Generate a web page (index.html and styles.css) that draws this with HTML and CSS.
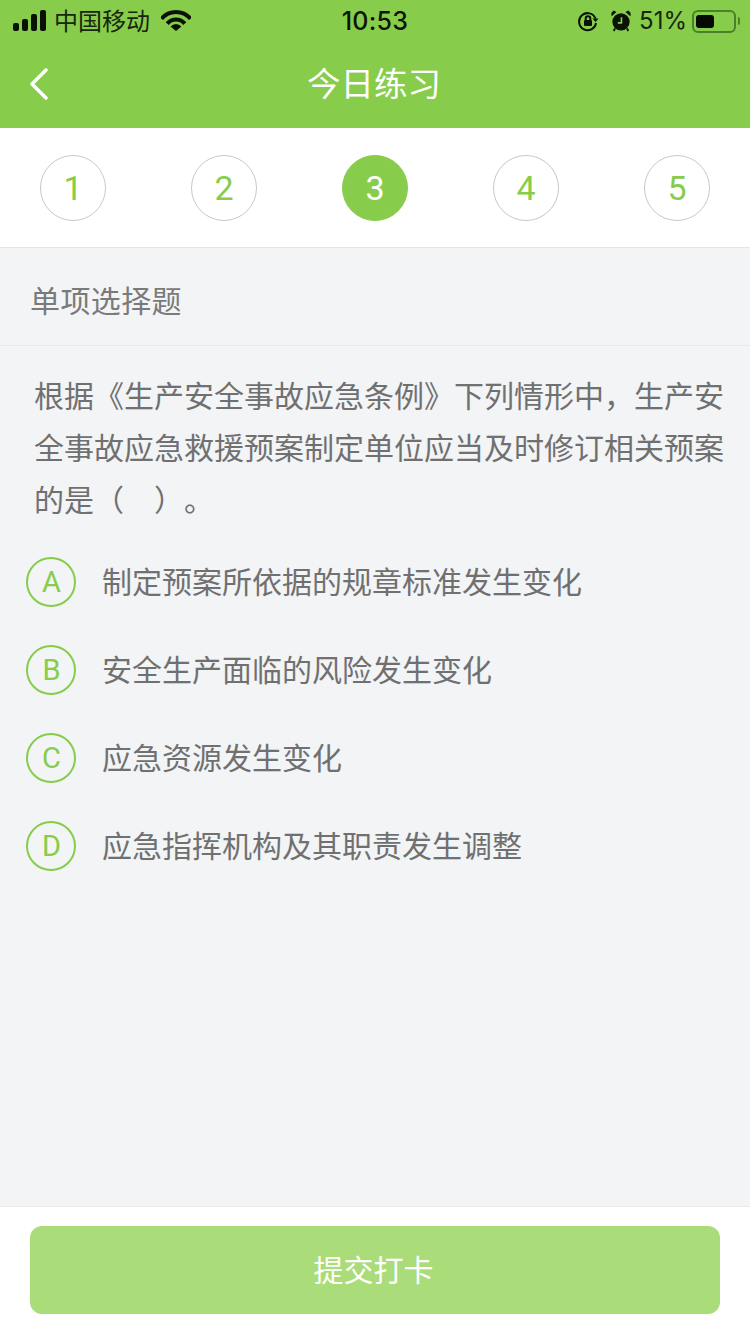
FILE: index.html
```html
<!DOCTYPE html>
<html lang="zh-CN">
<head>
<meta charset="utf-8">
<title>今日练习</title>
<link rel="stylesheet" href="styles.css">
</head>
<body>
<div class="page">
  <header class="top">
    <div class="status">
      <div class="status-left">
        <svg class="signal" width="36" height="22" viewBox="0 0 36 22"><rect x="1" y="13" width="6" height="8" rx="2"/><rect x="10" y="9" width="6" height="12" rx="2"/><rect x="19" y="4" width="6" height="17" rx="2"/><rect x="28" y="0" width="6" height="21" rx="2"/></svg>
        <span class="carrier">中国移动</span>
        <svg class="wifi" width="30" height="22" viewBox="0 0 30 22"><path class="arc" d="M.5 8.800A19 19 0 0 1 29.500 8.800"/><path class="arc" d="M6.200 13.600A11.500 11.500 0 0 1 23.800 13.600"/><path d="M15 21 9.600 16.500A7 7 0 0 1 20.400 16.500z"/></svg>
      </div>
      <span class="clock">10:53</span>
      <div class="status-right">
        <svg class="lock" width="22" height="22" viewBox="0 0 22 22"><path class="ring" d="M18.500 8.500A8.500 8.500 0 1 0 19 13"/><path d="M15.500 8.500h6l-3 3.500z"/><rect x="7" y="10" width="8" height="6" rx="1"/><path class="shackle" d="M8.700 10V8.600a2.300 2.300 0 0 1 4.600 0V10"/></svg>
        <svg class="alarm" width="20" height="22" viewBox="0 0 22 24"><circle cx="11" cy="13" r="9.500"/><path d="M.5 7 6 2 3 .5 .5 3zM21.500 7 16 2 19 .5 21.500 3z"/><path class="hand" d="M11.500 8v6H7.500"/><path class="leg" d="M4.500 20 3 23M17.500 20 19 23"/></svg>
        <span class="percent">51%</span>
        <span class="battery"><span class="battery-fill"></span></span>
        <span class="battery-cap"></span>
      </div>
    </div>
    <div class="nav">
      <svg class="back" width="20" height="32" viewBox="0 0 20 32"><path d="M17 2 3 16l14 14"/></svg>
      <h1 class="title">今日练习</h1>
    </div>
  </header>

  <nav class="steps">
    <span class="step">1</span>
    <span class="step">2</span>
    <span class="step step-on">3</span>
    <span class="step">4</span>
    <span class="step">5</span>
  </nav>

  <main class="body">
    <div class="kind">单项选择题</div>
    <p class="stem">根据《生产安全事故应急条例》下列情形中，生产安全事故应急救援预案制定单位应当及时修订相关预案的是（　）。</p>
    <ul class="options">
      <li class="option"><span class="badge">A</span><span class="option-text">制定预案所依据的规章标准发生变化</span></li>
      <li class="option"><span class="badge">B</span><span class="option-text">安全生产面临的风险发生变化</span></li>
      <li class="option"><span class="badge">C</span><span class="option-text">应急资源发生变化</span></li>
      <li class="option"><span class="badge">D</span><span class="option-text">应急指挥机构及其职责发生调整</span></li>
    </ul>
  </main>

  <footer class="foot">
    <button class="submit" type="button">提交打卡</button>
  </footer>
</div>
</body>
</html>
```
FILE: styles.css
```css
* { box-sizing: border-box; }
html, body { margin: 0; padding: 0; }
body {
  font-family: "Noto Sans CJK SC", "Liberation Sans", sans-serif;
  background: #f2f4f6;
  text-spacing-trim: space-all;
}
.page {
  width: 750px;
  height: 1334px;
  display: flex;
  flex-direction: column;
  overflow: hidden;
}

/* green top area */
.top {
  height: 128px;
  background: #87cd4b;
  flex: none;
}
.status {
  height: 40px;
  display: grid;
  grid-template-columns: 1fr auto 1fr;
  align-items: center;
  color: #0c1505;
}
.status-left {
  display: flex;
  align-items: center;
  padding-left: 12px;
}
.signal, .wifi, .lock, .alarm { fill: #0a1205; flex: none; }
.carrier {
  font-size: 24px;
  line-height: 38px;
  height: 40px;
  margin-left: 6px;
  color: #18260c;
}
.wifi { margin-left: 11px; }
.wifi .arc { fill: none; stroke: #0a1205; stroke-width: 4; }
.clock {
  font-family: Inter, "Liberation Sans", sans-serif;
  font-size: 25px;
  font-weight: 500;
  line-height: 42px;
  letter-spacing: .3px;
}
.status-right {
  display: flex;
  align-items: center;
  justify-content: flex-end;
  padding-right: 10px;
}
.lock .ring, .lock .shackle { fill: none; stroke: #0a1205; stroke-width: 2; }
.alarm { margin-left: 12px; }
.alarm .hand { fill: none; stroke: #87cd4b; stroke-width: 1.800; }
.alarm .leg { fill: none; stroke: #0a1205; stroke-width: 2; }
.percent {
  font-family: Inter, "Liberation Sans", sans-serif;
  font-size: 24px;
  line-height: 42px;
  margin-left: 8px;
  color: #18260c;
}
.battery {
  width: 44px;
  height: 23px;
  margin-left: 5px;
  border: 2px solid #4b7f28;
  border-radius: 6px;
  padding: 3px 2px;
  display: flex;
}
.battery-fill {
  width: 18px;
  background: #050a02;
  border-radius: 3px;
}
.battery-cap {
  width: 2px;
  height: 8px;
  margin-left: 2px;
  background: #4b7f28;
  border-radius: 0 2px 2px 0;
}
.nav {
  height: 88px;
  position: relative;
  display: flex;
  align-items: center;
  justify-content: center;
}
.back {
  position: absolute;
  left: 29px;
  top: 28px;
  fill: none;
  stroke: #fff;
  stroke-width: 3.500;
  stroke-linecap: round;
  stroke-linejoin: round;
}
.title {
  margin: 0;
  padding-right: 2px;
  font-size: 33.500px;
  font-weight: 400;
  color: #fff;
  line-height: 84px;
  height: 88px;
}

/* numbered question strip */
.steps {
  height: 120px;
  flex: none;
  background: #fff;
  border-bottom: 1px solid #e6e6e6;
  padding: 27px 40px 0;
  display: flex;
  justify-content: space-between;
  align-items: flex-start;
}
.step {
  width: 66px;
  height: 66px;
  border: 1px solid #c8c8c8;
  border-radius: 50%;
  display: flex;
  align-items: center;
  justify-content: center;
  font-family: Roboto, "Liberation Sans", sans-serif;
  font-size: 34px;
  color: #87cd4b;
}
.step-on {
  background: #87cd4b;
  border-color: #87cd4b;
  color: #fff;
}

/* question */
.body { flex: 1; min-height: 0; }
.kind {
  height: 98px;
  border-bottom: 1px solid #e6e8ea;
  padding-left: 30px;
  font-size: 30px;
  letter-spacing: .4px;
  line-height: 102px;
  color: #7a7a7a;
}
.stem {
  margin: 0;
  padding: 22px 25px 0 34px;
  font-size: 30px;
  line-height: 52px;
  color: #707070;
}
.options {
  list-style: none;
  margin: 0;
  padding: 14px 0 0 26px;
}
.option {
  height: 88px;
  display: flex;
  align-items: center;
  font-size: 30px;
  color: #707070;
}
.option-text { padding-bottom: 4px; }
.badge {
  width: 50px;
  height: 50px;
  flex: none;
  margin-right: 26px;
  padding-left: 1px;
  border: 2px solid #87cd4b;
  border-radius: 50%;
  display: flex;
  align-items: center;
  justify-content: center;
  font-family: Roboto, "Liberation Sans", sans-serif;
  font-size: 29px;
  color: #87cd4b;
}

/* submit bar */
.foot {
  height: 128px;
  flex: none;
  background: #fff;
  border-top: 1px solid #e8eaec;
  padding: 19px 30px 0;
}
.submit {
  display: block;
  width: 690px;
  height: 88px;
  border: 0;
  border-radius: 12px;
  background: #abdc7a;
  color: #fff;
  font-family: inherit;
  font-size: 30px;
  padding: 0 3px 4px 0;
}
```
